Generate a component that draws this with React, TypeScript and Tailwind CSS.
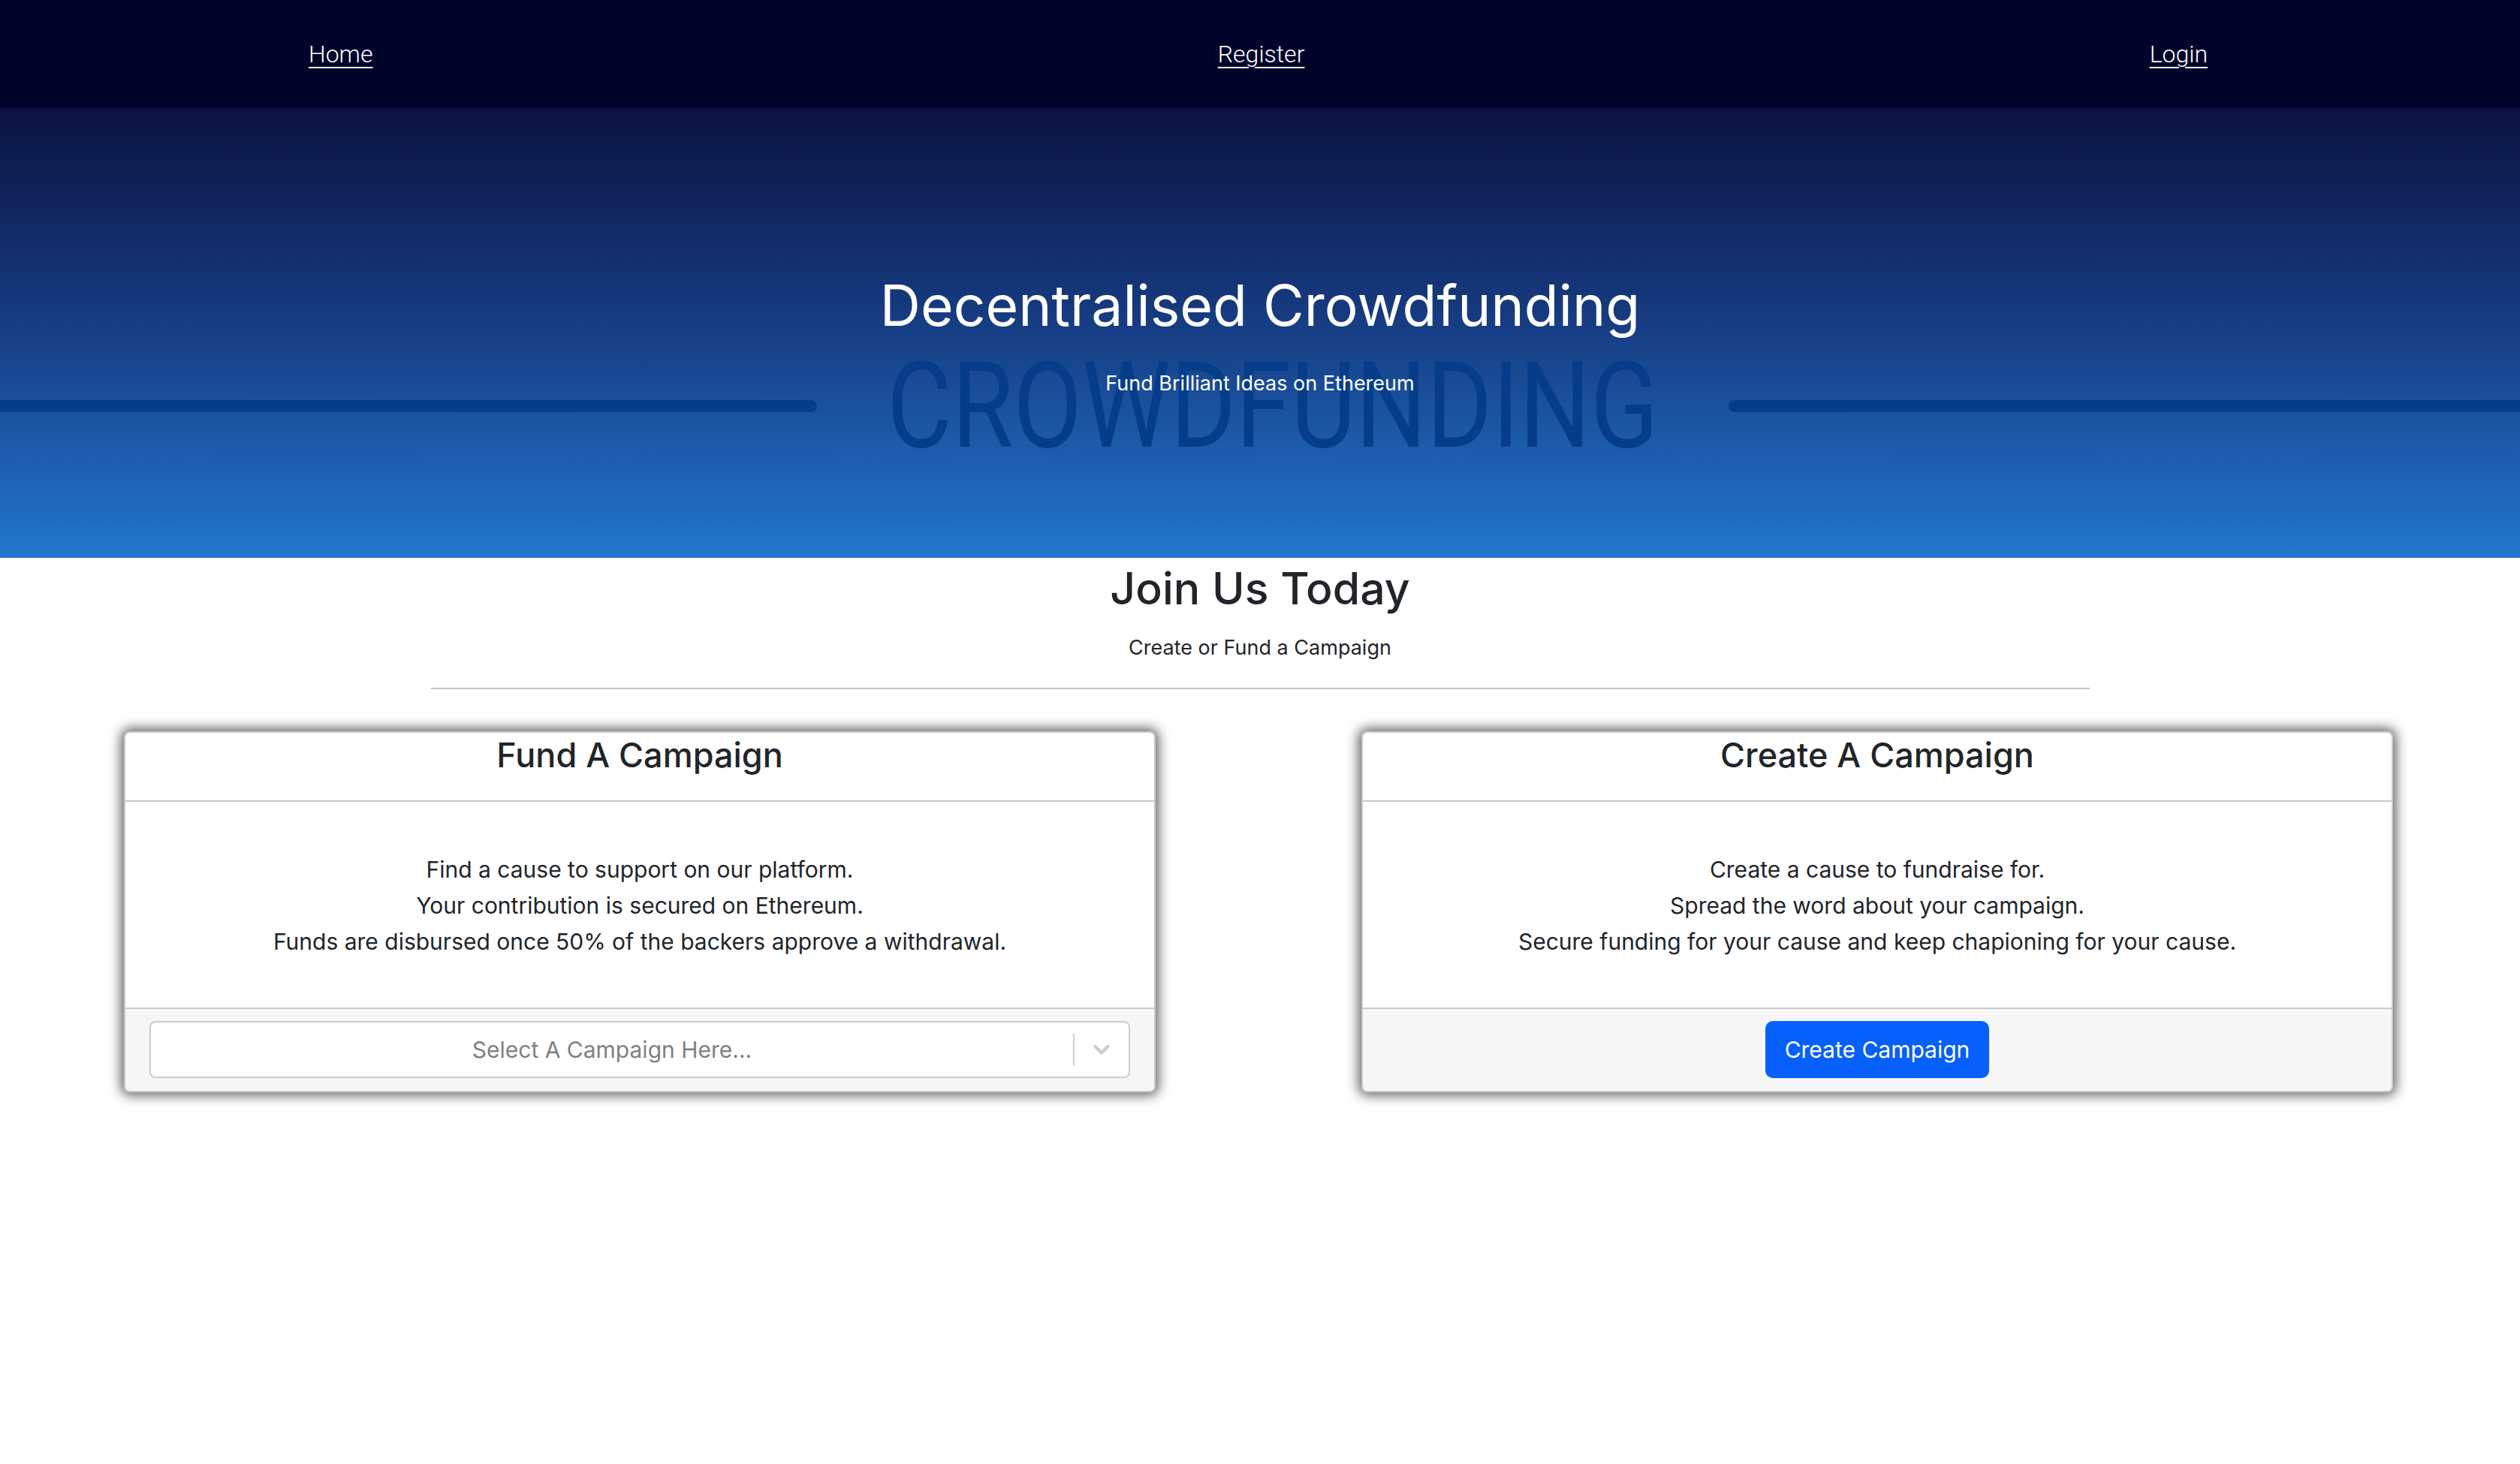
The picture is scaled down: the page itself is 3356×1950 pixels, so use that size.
import { ChevronDown } from 'lucide-react'

const navLinks = ['Home', 'Register', 'Login']

const fundLines = [
  'Find a cause to support on our platform.',
  'Your contribution is secured on Ethereum.',
  'Funds are disbursed once 50% of the backers approve a withdrawal.',
]

const createLines = [
  'Create a cause to fundraise for.',
  'Spread the word about your campaign.',
  'Secure funding for your cause and keep chapioning for your cause.',
]

function Navbar() {
  return (
    <nav className="h-[144px] bg-[#01042a] flex items-start justify-between pl-[411px] pr-[416px] pt-[48px]">
      {navLinks.map((link) => (
        <a
          key={link}
          href="#"
          className="text-white text-[32px] leading-[48px] font-light underline underline-offset-[6px] decoration-2"
          style={{ fontFamily: 'Roboto, "Liberation Sans", sans-serif' }}>
          {link}
        </a>
      ))}
    </nav>
  )
}

function Hero() {
  return (
    <header className="relative h-[599px] bg-gradient-to-b from-[#0a1240] via-[#173f86] to-[#2177cf] flex flex-col items-center pt-[219px] overflow-hidden">
      {/* watermark behind the title */}
      <div className="absolute left-0 right-0 top-[317px] h-[160px] flex items-center">
        <div className="w-[1088px] h-[16px] rounded-r-full bg-[#053d8a]" />
        <div className="w-[1214px] flex justify-center">
          <span
            className="text-[160px] leading-none text-[#053d8a] scale-x-[0.83] whitespace-nowrap"
            style={{ fontFamily: 'Roboto, sans-serif' }}>
            CROWDFUNDING
          </span>
        </div>
        <div className="flex-1 h-[16px] rounded-l-full bg-[#053d8a]" />
      </div>
      <h1 className="relative z-10 text-white text-[75px] leading-[88px] font-normal">
        Decentralised Crowdfunding
      </h1>
      <p className="relative z-10 text-white text-[27px] leading-[40px] mt-[40px]">
        Fund Brilliant Ideas on Ethereum
      </p>
    </header>
  )
}

type CardProps = {
  title: string
  lines: string[]
  children: React.ReactNode
}

function Card({ title, lines, children }: CardProps) {
  return (
    <div className="bg-white rounded-lg border-2 border-[#c9c9c9] shadow-[0_0_16px_4px_rgba(0,0,0,0.62)] overflow-hidden">
      <div className="px-8 pt-0 pb-[30px] border-b-2 border-[#c9c9c9] text-center">
        <h3 className="text-[45px] leading-[60px] font-medium text-[#212529]">{title}</h3>
      </div>
      <div className="pt-[66px] pb-[64px] text-center text-[30px] leading-[48px] text-[#212529]">
        {lines.map((line) => (
          <p key={line}>{line}</p>
        ))}
      </div>
      <div className="bg-[#f6f6f6] border-t-2 border-[#c9c9c9] px-8 pt-[16px] pb-[17px] flex justify-center">
        {children}
      </div>
    </div>
  )
}

function CampaignSelect() {
  return (
    <div className="w-full h-[76px] bg-white border-2 border-[#cccccc] rounded-lg flex items-center">
      <div className="flex-1 text-center text-[30px] text-[#808080]">Select A Campaign Here...</div>
      <div className="w-[2px] h-[42px] bg-[#cccccc]" />
      <div className="w-[72px] flex justify-center text-[#cccccc]">
        <ChevronDown size={34} strokeWidth={3} />
      </div>
    </div>
  )
}

export default function App() {
  return (
    <div
      className="min-h-screen bg-white"
      style={{ fontFamily: 'Inter, "Noto Sans", "Liberation Sans", sans-serif' }}>
      <Navbar />
      <Hero />
      <section className="flex flex-col items-center">
        <h2 className="text-[59px] leading-[72px] font-medium text-[#212529] mt-[5px]">Join Us Today</h2>
        <p className="text-[27px] leading-[42px] text-[#212529] mt-[22px]">Create or Fund a Campaign</p>
        <hr className="w-[2209px] border-t-2 border-[#c4c4c4] mt-[32px]" />
      </section>
      <main className="grid grid-cols-2 gap-[274px] pl-[165px] pr-[169px] mt-[56px] pb-16">
        <Card title="Fund A Campaign" lines={fundLines}>
          <CampaignSelect />
        </Card>
        <Card title="Create A Campaign" lines={createLines}>
          <button className="h-[76px] px-[26px] rounded-[10px] bg-[#0760fc] text-white text-[30px]">
            Create Campaign
          </button>
        </Card>
      </main>
    </div>
  )
}
